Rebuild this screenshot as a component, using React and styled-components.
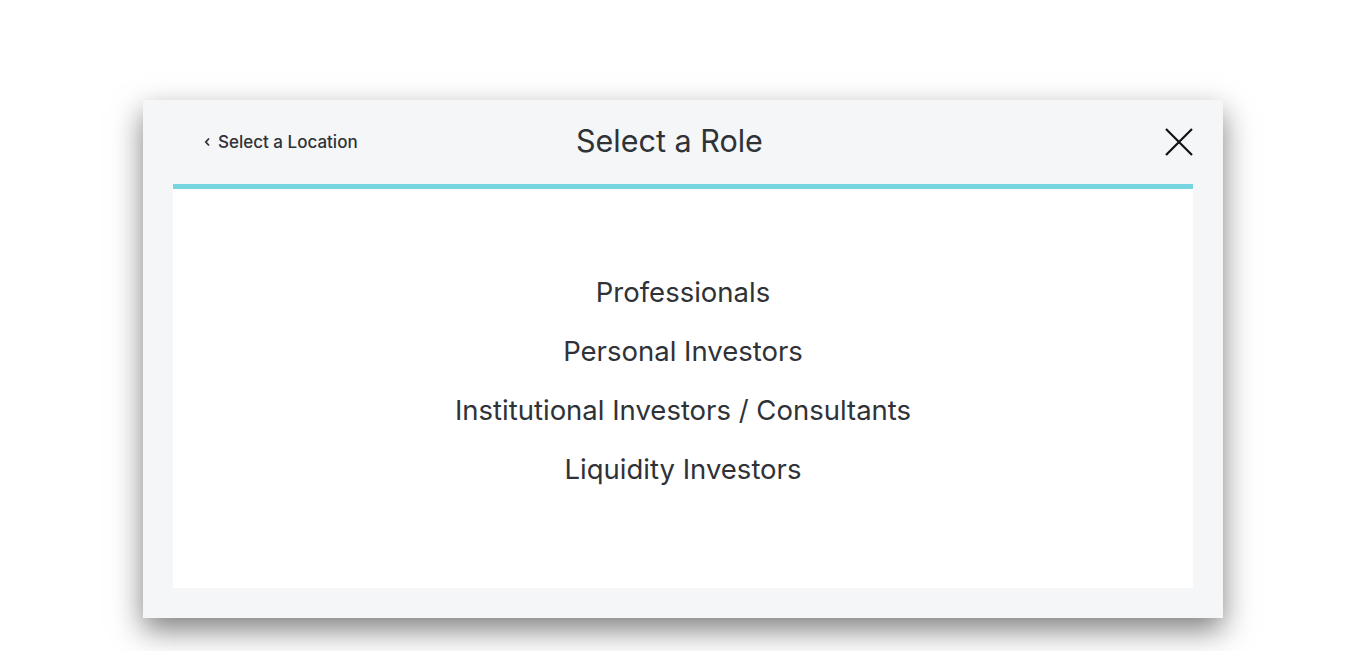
import React from 'react';
import styled, { createGlobalStyle } from 'styled-components';

const GlobalStyle = createGlobalStyle`
  html, body {
    margin: 0;
    padding: 0;
    background: #ffffff;
  }
  body {
    font-family: Inter, "Liberation Sans", Arial, sans-serif;
    color: #2f3237;
  }
`;

const Page = styled.div`
  min-height: 100vh;
  padding-top: 100px;
  box-sizing: border-box;
`;

const Modal = styled.div`
  width: 1080px;
  height: 518px;
  margin: 0 auto;
  background: #f5f6f8;
  box-shadow: 0 12px 28px rgba(0, 0, 0, 0.5);
  padding: 0 30px 30px;
  box-sizing: border-box;
  display: flex;
  flex-direction: column;
`;

const Header = styled.header`
  height: 84px;
  display: grid;
  grid-template-columns: 372px auto 1fr;
  align-items: center;
  padding-left: 31px;
`;

const BackLink = styled.a`
  display: flex;
  align-items: center;
  gap: 7px;
  font-size: 17px;
  font-weight: 500;
  color: #2f3237;
  text-decoration: none;
  cursor: pointer;
`;

const Title = styled.h1`
  margin: 0 0 4px;
  font-size: 30.5px;
  font-weight: 400;
  color: #2f3237;
`;

const CloseButton = styled.button`
  justify-self: end;
  width: 28px;
  height: 28px;
  padding: 0;
  border: none;
  background: none;
  cursor: pointer;
  display: flex;
  align-items: center;
  justify-content: center;
`;

const Panel = styled.div`
  flex: 1;
  background: #ffffff;
  border-top: 5px solid #76d5df;
  display: flex;
  flex-direction: column;
  align-items: center;
  padding-top: 74px;
`;

const RoleLink = styled.a`
  display: block;
  line-height: 59px;
  font-size: 27.5px;
  font-weight: 400;
  color: #2f3237;
  text-decoration: none;
  cursor: pointer;
`;

const roles = [
  'Professionals',
  'Personal Investors',
  'Institutional Investors / Consultants',
  'Liquidity Investors',
];

const App = () => (
  <>
    <GlobalStyle />
    <Page>
      <Modal>
        <Header>
          <BackLink>
            <svg width="7" height="10" viewBox="0 0 7 10" fill="none">
              <path d="M5 1.5L1.8 5L5 8.5" stroke="#2f3237" strokeWidth="1.8" />
            </svg>
            Select a Location
          </BackLink>
          <Title>Select a Role</Title>
          <CloseButton aria-label="Close">
            <svg width="28" height="28" viewBox="0 0 28 28" fill="none">
              <path d="M1 1L27 27M27 1L1 27" stroke="#111" strokeWidth="2.2" />
            </svg>
          </CloseButton>
        </Header>
        <Panel>
          {roles.map((role) => (
            <RoleLink key={role}>{role}</RoleLink>
          ))}
        </Panel>
      </Modal>
    </Page>
  </>
);

export default App;
